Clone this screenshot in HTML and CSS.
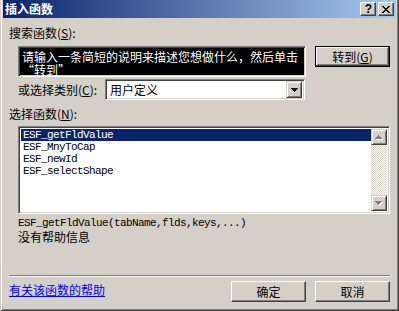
FILE: index.html
```html
<!DOCTYPE html>
<html lang="zh-CN">
<head>
<meta charset="utf-8">
<title>插入函数</title>
<link rel="stylesheet" href="styles.css">
</head>
<body>
<div class="window">
  <div class="titlebar">
    <span class="title">插入函数</span>
    <div class="tbtns">
      <span class="tbtn tq">?</span>
      <span class="tbtn tclose"><svg width="8" height="7" viewBox="0 0 8 7"><path d="M0 0h2v1H0zM6 0h2v1H6zM1 1h2v1H1zM5 1h2v1H5zM2 2h4v1H2zM3 3h2v1H3zM2 4h4v1H2zM1 5h2v1H1zM5 5h2v1H5zM0 6h2v1H0zM6 6h2v1H6z" fill="#000"/></svg></span>
    </div>
  </div>
  <div class="content">
    <div class="label l-search">搜索函数(<u>S</u>):</div>
    <div class="row-search">
      <div class="field searchbox"><div class="sel-text">请输入一条简短的说明来描述您想做什么，然后单击<br>“转到”</div></div>
      <div class="btn btn-default">转到(<u>G</u>)</div>
    </div>
    <div class="row-cat">
      <span class="label cat-label">或选择类别(<u>C</u>):</span>
      <div class="field combo">
        <span class="combo-val">用户定义</span>
        <span class="combo-btn"><svg width="7" height="4" viewBox="0 0 7 4"><path d="M0 0h7v1H0zM1 1h5v1H1zM2 2h3v1H2zM3 3h1v1H3z" fill="#000"/></svg></span>
      </div>
    </div>
    <div class="label l-func">选择函数(<u>N</u>):</div>
    <div class="field listbox">
      <ul class="items">
        <li class="item selected">ESF_getFldValue</li>
        <li class="item">ESF_MnyToCap</li>
        <li class="item">ESF_newId</li>
        <li class="item">ESF_selectShape</li>
      </ul>
      <div class="scrollbar">
        <span class="sbtn"><svg width="8" height="5" viewBox="0 0 8 5"><path d="M4 1h1v1H4zM3 2h3v1H3zM2 3h5v1H2zM1 4h7v1H1z" fill="#fff"/><path d="M3 0h1v1H3zM2 1h3v1H2zM1 2h5v1H1zM0 3h7v1H0z" fill="#808080"/></svg></span>
        <span class="track"></span>
        <span class="sbtn"><svg width="8" height="5" viewBox="0 0 8 5"><path d="M1 1h7v1H1zM2 2h5v1H2zM3 3h3v1H3zM4 4h1v1H4z" fill="#fff"/><path d="M0 0h7v1H0zM1 1h5v1H1zM2 2h3v1H2zM3 3h1v1H3z" fill="#808080"/></svg></span>
      </div>
    </div>
    <div class="sig">ESF_getFldValue(tabName,flds,keys,...)</div>
    <div class="desc">没有帮助信息</div>
    <div class="sep"></div>
    <div class="footer">
      <a class="help" href="#">有关该函数的帮助</a>
      <div class="btns">
        <div class="btn">确定</div>
        <div class="btn">取消</div>
      </div>
    </div>
  </div>
</div>
</body>
</html>
```
FILE: styles.css
```css
html, body {
  margin: 0;
  padding: 0;
  background: #d4d0c8;
}
body {
  font-family: "Noto Sans CJK SC", "Liberation Sans", sans-serif;
  font-size: 12px;
  line-height: 12px;
  color: #000;
}
.window {
  width: 399px;
  height: 311px;
  box-sizing: border-box;
  padding: 0 3px 3px 3px;
  background: #d4d0c8;
  display: flex;
  flex-direction: column;
  box-shadow: inset 1px 0 #d4d0c8, inset -1px -1px #404040, inset 2px 0 #fff, inset -2px -2px #808080;
}
.titlebar {
  height: 18px;
  flex: none;
  display: flex;
  align-items: center;
  padding-left: 2px;
  padding-right: 2px;
  background: linear-gradient(to right, #0a246a, #a6caf0);
}
.title {
  color: #fff;
  font-weight: bold;
  font-size: 12px;
  line-height: 12px;
  flex: 1;
}
.tbtns {
  display: flex;
  gap: 2px;
}
.tbtn {
  box-sizing: border-box;
  width: 16px;
  height: 14px;
  background: #d4d0c8;
  border: 1px solid;
  border-color: #fff #404040 #404040 #fff;
  box-shadow: inset -1px -1px #808080;
  display: flex;
  align-items: center;
  justify-content: center;
}
.tq {
  font-family: "Liberation Sans", sans-serif;
  font-weight: bold;
  font-size: 12px;
  line-height: 12px;
  padding-left: 1px;
}
.content {
  flex: 1;
  display: flex;
  flex-direction: column;
  padding: 0 6px 6px 6px;
}
.label {
  height: 12px;
  white-space: nowrap;
}
.label u, .btn u {
  text-decoration: underline;
}
.l-search {
  margin-top: 9px;
}
.row-search {
  margin-top: 7px;
  display: flex;
  align-items: flex-start;
}
.field {
  box-sizing: border-box;
  border: 1px solid;
  border-color: #808080 #fff #fff #808080;
  box-shadow: inset 1px 1px #404040, inset -1px -1px #d4d0c8;
  background: #fff;
}
.searchbox {
  margin-left: 9px;
  width: 288px;
  height: 31px;
  padding: 1px;
  background: #000;
}
.sel-text {
  color: #fff;
  padding: 2px 0 0 2px;
  line-height: 13px;
  white-space: nowrap;
}
.btn {
  box-sizing: border-box;
  width: 75px;
  height: 21px;
  border: 1px solid;
  border-color: #fff #404040 #404040 #fff;
  box-shadow: inset -1px -1px #808080;
  display: flex;
  align-items: center;
  justify-content: center;
  background: #d4d0c8;
}
.btn-default {
  margin-left: auto;
  border-color: #000;
  box-shadow: inset -1px -1px #404040, inset 1px 1px #fff, inset -2px -2px #808080;
}
.row-cat {
  margin-top: 2px;
  display: flex;
  align-items: center;
}
.cat-label {
  width: 87px;
  margin-left: 9px;
}
.combo {
  width: 200px;
  height: 21px;
  display: flex;
  align-items: center;
  padding: 2px;
}
.combo-val {
  flex: 1;
  padding-left: 2px;
}
.combo-btn {
  box-sizing: border-box;
  width: 16px;
  height: 17px;
  border: 1px solid;
  border-color: #d4d0c8 #404040 #404040 #d4d0c8;
  box-shadow: inset 1px 1px #fff, inset -1px -1px #808080;
  background: #d4d0c8;
  display: flex;
  align-items: center;
  justify-content: center;
}
.l-func {
  margin-top: 8px;
}
.listbox {
  margin-top: 6px;
  margin-left: 9px;
  width: 372px;
  height: 88px;
  padding: 2px;
  display: flex;
}
.items {
  list-style: none;
  margin: 0;
  padding: 0;
  flex: 1;
}
.item {
  height: 12px;
  line-height: 12px;
  padding-left: 2px;
  font-family: "Liberation Mono", "DejaVu Sans Mono", monospace;
  font-size: 11px;
  letter-spacing: -0.6px;
}
.selected {
  background: #0a246a;
  color: #fff;
}
.scrollbar {
  width: 16px;
  display: flex;
  flex-direction: column;
}
.sbtn {
  box-sizing: border-box;
  width: 16px;
  height: 16px;
  border: 1px solid;
  border-color: #d4d0c8 #404040 #404040 #d4d0c8;
  box-shadow: inset 1px 1px #fff, inset -1px -1px #808080;
  background: #d4d0c8;
  display: flex;
  align-items: center;
  justify-content: center;
}
.track {
  flex: 1;
  background: repeating-conic-gradient(#fff 0 25%, #d4d0c8 0 50%) 0 0 / 2px 2px;
}
.sig {
  margin-top: 3px;
  margin-left: 9px;
  height: 12px;
  line-height: 12px;
  font-family: "Liberation Mono", "DejaVu Sans Mono", monospace;
  font-size: 11px;
  letter-spacing: -0.6px;
  white-space: nowrap;
}
.desc {
  margin-top: 2px;
  margin-left: 9px;
  height: 12px;
}
.sep {
  margin-top: auto;
  height: 1px;
  border-top: 1px solid #808080;
  border-bottom: 1px solid #fff;
  height: 0;
}
.footer {
  display: flex;
  align-items: flex-start;
  margin-top: 4px;
}
.help {
  color: #0000ff;
  text-decoration: underline;
  margin-top: 3px;
  line-height: 12px;
}
.btns {
  margin-left: auto;
  display: flex;
  gap: 9px;
}
```
